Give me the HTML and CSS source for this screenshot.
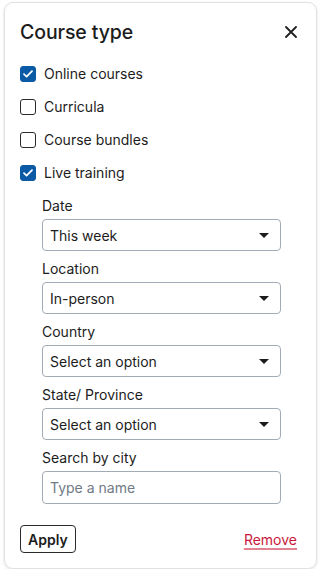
FILE: index.html
```html
<!DOCTYPE html>
<html>
<head>
<meta charset="utf-8">
<link rel="stylesheet" href="styles.css">
</head>
<body>
<div class="card">
  <div class="header">
    <h2 class="title">Course type</h2>
    <button class="close" aria-label="Close">
      <svg width="12" height="12" viewBox="0 0 12 12"><path d="M1 1L11 11M11 1L1 11" stroke="#1f1f1f" stroke-width="1.8" stroke-linecap="round"/></svg>
    </button>
  </div>
  <div class="options">
    <label class="opt"><span class="box checked"><svg width="12" height="10" viewBox="0 0 12 10"><path d="M2 5.2L4.6 7.6L10 2.2" fill="none" stroke="#fff" stroke-width="1.8" stroke-linecap="round" stroke-linejoin="round"/></svg></span>Online courses</label>
    <label class="opt"><span class="box"></span>Curricula</label>
    <label class="opt"><span class="box"></span>Course bundles</label>
    <label class="opt"><span class="box checked"><svg width="12" height="10" viewBox="0 0 12 10"><path d="M2 5.2L4.6 7.6L10 2.2" fill="none" stroke="#fff" stroke-width="1.8" stroke-linecap="round" stroke-linejoin="round"/></svg></span>Live training</label>
  </div>
  <div class="fields">
    <div class="field">
      <div class="label">Date</div>
      <div class="select"><span>This week</span><span class="caret"></span></div>
    </div>
    <div class="field">
      <div class="label">Location</div>
      <div class="select"><span>In-person</span><span class="caret"></span></div>
    </div>
    <div class="field">
      <div class="label">Country</div>
      <div class="select"><span>Select an option</span><span class="caret"></span></div>
    </div>
    <div class="field">
      <div class="label">State/ Province</div>
      <div class="select"><span>Select an option</span><span class="caret"></span></div>
    </div>
    <div class="field">
      <div class="label">Search by city</div>
      <div class="input"><span class="ph">Type a name</span></div>
    </div>
  </div>
  <div class="footer">
    <button class="apply">Apply</button>
    <a class="remove" href="#">Remove</a>
  </div>
</div>
</body>
</html>
```
FILE: styles.css
```css
* { box-sizing: border-box; }
html, body { margin: 0; padding: 0; background: #fff; }
body {
  font-family: Inter, "Noto Sans", sans-serif;
  color: #1c1c1c;
  padding: 2px 5px 0 4px;
}
.card {
  width: 313px;
  height: 567px;
  border: 1px solid #dfe1e4;
  border-radius: 9px;
  box-shadow: 0 1px 3px rgba(0,0,0,0.12);
  padding: 15px 16px 14px 15px;
  display: flex;
  flex-direction: column;
}
.header {
  display: flex;
  align-items: center;
  justify-content: space-between;
  height: 28px;
}
.title {
  margin: 0;
  font-size: 19.5px;
  font-weight: 500;
  line-height: 28px;
  letter-spacing: -0.1px;
}
.close {
  border: 0;
  background: none;
  padding: 0;
  width: 12px;
  height: 12px;
  margin-right: 3px;
  display: flex;
}
.options {
  margin-top: 11px;
  display: flex;
  flex-direction: column;
}
.opt {
  display: flex;
  align-items: center;
  height: 33px;
  font-size: 14px;
  gap: 8px;
}
.box {
  width: 16px;
  height: 16px;
  border: 1.5px solid #2a2a2a;
  border-radius: 3px;
  display: flex;
  align-items: center;
  justify-content: center;
}
.box.checked {
  background: #0b5aa6;
  border-color: #0b5aa6;
}
.fields {
  margin-top: 7px;
  margin-left: 22px;
  margin-right: 19px;
  display: flex;
  flex-direction: column;
}
.field { margin-bottom: 8px; }
.label {
  font-size: 14px;
  line-height: 20px;
  margin-bottom: 3px;
}
.select, .input {
  height: 32px;
  border: 1px solid #a3acb6;
  border-radius: 4px;
  display: flex;
  align-items: center;
  justify-content: space-between;
  padding: 0 11px 0 7px;
  font-size: 14px;
}
.input { height: 33px; }
.caret {
  width: 0;
  height: 0;
  border-left: 5px solid transparent;
  border-right: 5px solid transparent;
  border-top: 5px solid #1c1c1c;
}
.ph { color: #6f7a86; }
.footer {
  margin-top: 13px;
  display: flex;
  align-items: center;
  justify-content: space-between;
}
.apply {
  font-family: inherit;
  font-size: 14px;
  font-weight: 600;
  color: #1c1c1c;
  background: #fff;
  border: 1px solid #2a2a2a;
  border-radius: 4px;
  height: 28px;
  padding: 0 7px;
}
.remove {
  font-size: 14px;
  color: #c8193a;
  text-decoration: underline;
  text-decoration-color: #e0828f;
  text-decoration-thickness: 2px;
  text-underline-offset: 3px;
  margin-right: 3px;
}
```
